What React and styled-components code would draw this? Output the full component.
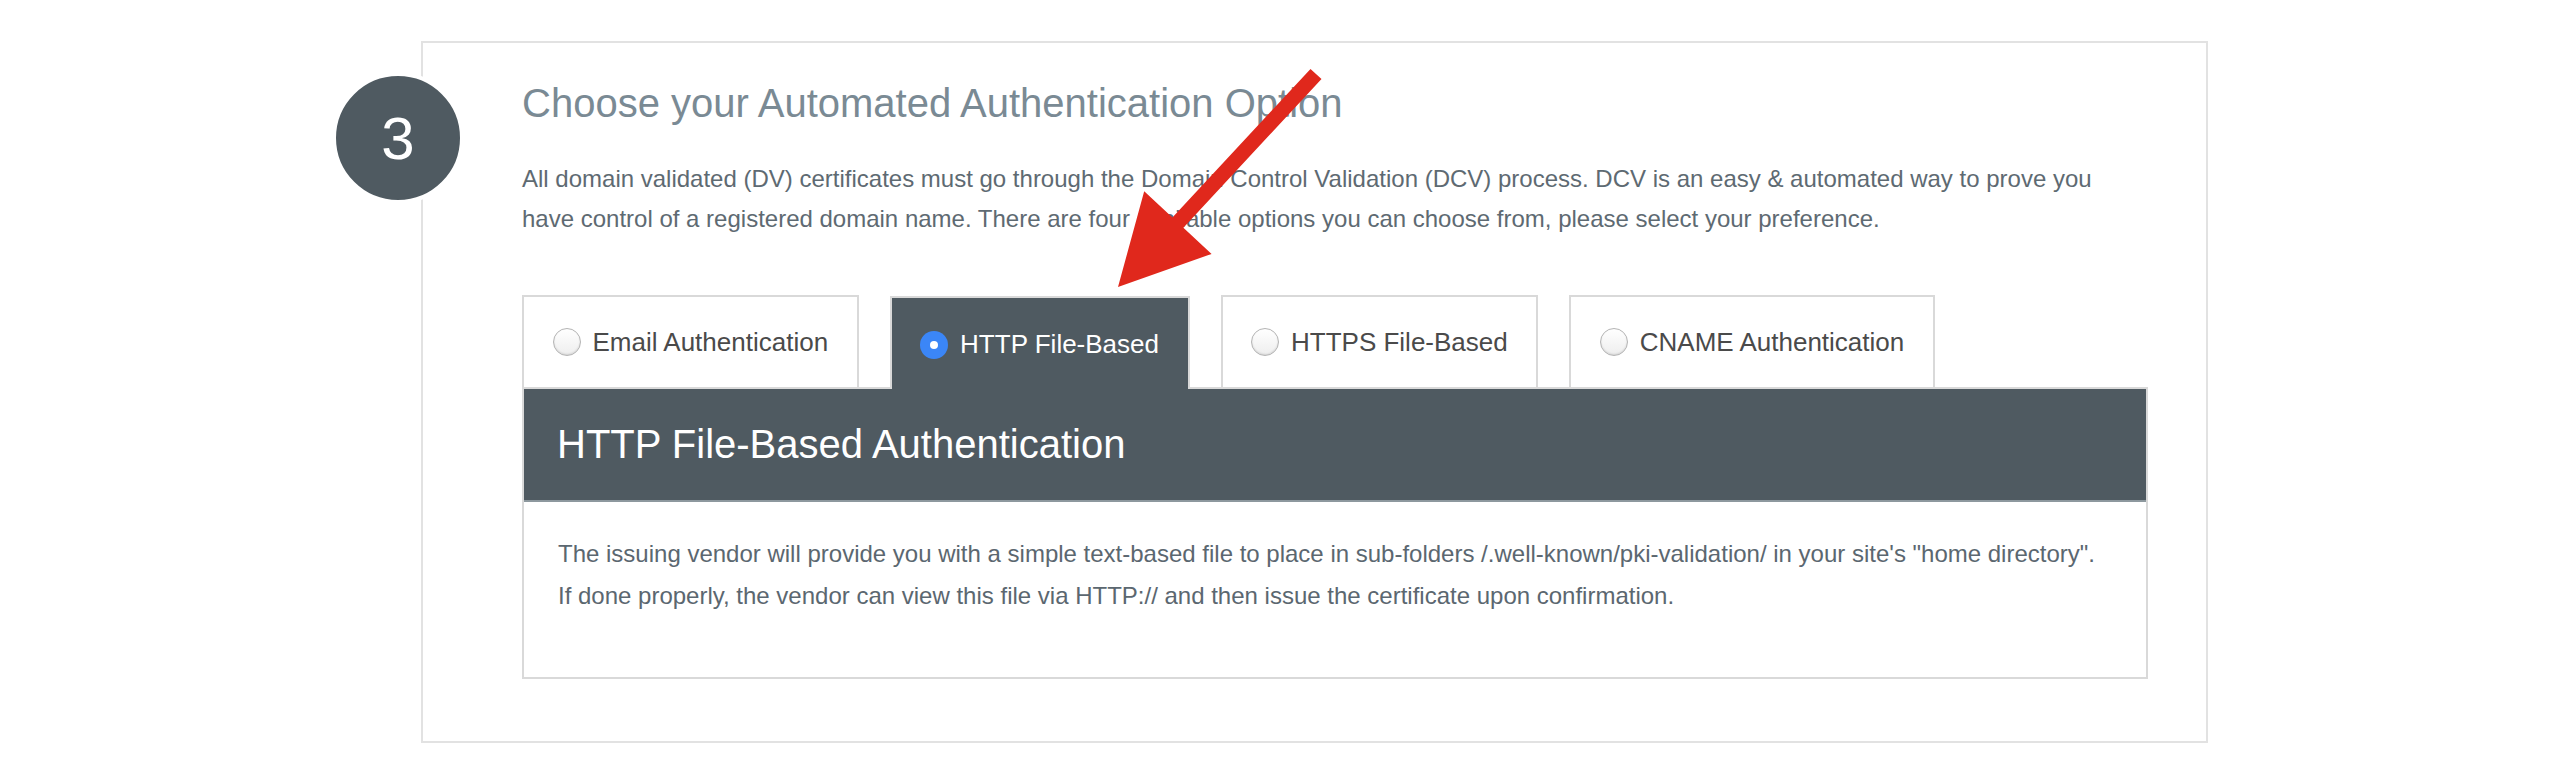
import React from 'react';
import styled, { createGlobalStyle } from 'styled-components';

const GlobalStyle = createGlobalStyle`
  html, body {
    margin: 0;
    padding: 0;
    background: #ffffff;
  }
  body {
    font-family: "Liberation Sans", Arial, Helvetica, sans-serif;
  }
  *, *::before, *::after {
    box-sizing: border-box;
  }
`;

const tabs = [
    { id: 'email', label: 'Email Authentication' },
    { id: 'http', label: 'HTTP File-Based' },
    { id: 'https', label: 'HTTPS File-Based' },
    { id: 'cname', label: 'CNAME Authentication' },
];

function Arrow() {
    return (
        <ArrowSvg width="1000" height="300" viewBox="0 0 1000 300">
            <polygon
                fill="#e0281c"
                points="695,244 788.6,210.9 760.4,184.7 898.5,36.1 887.5,25.9 749.4,174.5 721.2,148.3"
            />
        </ArrowSvg>
    );
}

function StepThree() {
    const active = 'http';

    return (
        <StepBox>
            <StepNumber>3</StepNumber>
            <Title>Choose your Automated Authentication Option</Title>
            <Intro>
                All domain validated (DV) certificates must go through the Domain Control Validation (DCV) process. DCV is an easy &amp; automated way to prove you
                have control of a registered domain name. There are four available options you can choose from, please select your preference.
            </Intro>

            <TabRow>
                {tabs.map((t) => (
                    <Tab key={t.id} $active={t.id === active}>
                        <Radio $checked={t.id === active} />
                        {t.label}
                    </Tab>
                ))}
            </TabRow>

            <Panel>
                <PanelHead>HTTP File-Based Authentication</PanelHead>
                <PanelBody>
                    The issuing vendor will provide you with a simple text-based file to place in sub-folders /.well-known/pki-validation/ in your site's "home directory".
                    <br />
                    If done properly, the vendor can view this file via HTTP:// and then issue the certificate upon confirmation.
                </PanelBody>
            </Panel>

            <Arrow />
        </StepBox>
    );
}

export default function App() {
    return (
        <>
            <GlobalStyle />
            <Page>
                <StepThree />
            </Page>
        </>
    );
}

const Page = styled.div`
  padding: 41px 0 33px 421px;
`;

const StepBox = styled.section`
  position: relative;
  width: 1787px;
  border: 2px solid #e2e2e2;
  padding: 36px 58px 62px 99px;
`;

const StepNumber = styled.div`
  position: absolute;
  left: -91px;
  top: 29px;
  width: 132px;
  height: 132px;
  border: 4px solid #ffffff;
  border-radius: 50%;
  background: #4f5a61;
  color: #ffffff;
  font-size: 60px;
  display: flex;
  align-items: center;
  justify-content: center;
`;

const Title = styled.h2`
  margin: 0;
  font-size: 40px;
  font-weight: 400;
  line-height: 48px;
  color: #7a8a94;
`;

const Intro = styled.p`
  margin: 32px 0 0;
  font-size: 24px;
  line-height: 40px;
  color: #5e6a72;
`;

const TabRow = styled.div`
  display: flex;
  align-items: flex-end;
  gap: 31px;
  margin-top: 56px;
`;

const Tab = styled.div`
  position: relative;
  display: flex;
  align-items: center;
  gap: 12px;
  height: ${(p) => (p.$active ? '93px' : '92px')};
  padding: ${(p) => (p.$active ? '2px 28.5px 0' : '0 28.5px')};
  margin-bottom: ${(p) => (p.$active ? '-2px' : '0')};
  border: 2px solid #d9d9d9;
  border-bottom: none;
  background: ${(p) => (p.$active ? '#4f5a61' : '#ffffff')};
  color: ${(p) => (p.$active ? '#ffffff' : '#4a4a4a')};
  font-size: 26px;
  z-index: ${(p) => (p.$active ? 1 : 0)};
`;

const Radio = styled.span`
  flex: none;
  position: relative;
  width: 28px;
  height: 28px;
  border-radius: 50%;
  ${(p) =>
        p.$checked
            ? `
    background: #3b86f7;
    &::after {
      content: '';
      position: absolute;
      left: 10px;
      top: 10px;
      width: 8px;
      height: 8px;
      border-radius: 50%;
      background: #ffffff;
    }
  `
            : `
    border: 1.5px solid #b4b4b4;
    background: linear-gradient(#ffffff, #eeeeee);
    box-shadow: inset 0 -1px 2px rgba(0, 0, 0, 0.12);
  `}
`;

const Panel = styled.div`
  border: 2px solid #d9d9d9;
`;

const PanelHead = styled.div`
  display: flex;
  align-items: center;
  height: 113px;
  padding: 0 33px;
  background: #4f5a61;
  border-bottom: 2px solid #8d989e;
  color: #ffffff;
  font-size: 40px;
`;

const PanelBody = styled.p`
  margin: 0;
  padding: 31px 34px 61px;
  font-size: 24px;
  line-height: 41.5px;
  color: #5b6770;
`;

const ArrowSvg = styled.svg`
  position: absolute;
  left: 0;
  top: 0;
  pointer-events: none;
`;
